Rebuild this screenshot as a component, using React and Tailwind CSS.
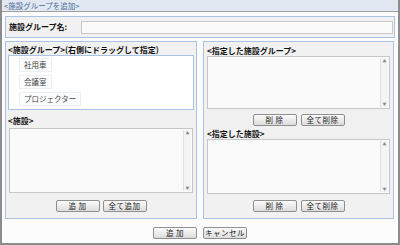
const FONT = { fontFamily: '"Noto Sans CJK JP", "Noto Sans", sans-serif' }

function Btn({ children }) {
  return (
    <button className="h-[12px] w-[44px] whitespace-nowrap rounded-[2px] border border-[#8f8f8f] bg-gradient-to-b from-[#fbfbfb] to-[#dcdcdc] px-0 text-[7.5px] leading-[10px] tracking-[0.5px] text-[#222]">
      {children}
    </button>
  )
}

function ListBox({ h }) {
  return (
    <div className={`mx-[3px] flex border border-[#c6c6c6] bg-[#fafafa] ${h}`}>
      <div className="flex-1" />
      <div className="my-[1px] mr-[1px] flex w-[8px] flex-col justify-between border-l border-[#e2e2e2] bg-[#f4f4f4] text-center text-[4px] leading-[6px] text-[#888]">
        <span>▲</span>
        <span>▼</span>
      </div>
    </div>
  )
}

const GROUPS = ['社用車', '会議室', 'プロジェクター']

export default function App() {
  return (
    <div style={FONT} className="flex h-[245px] w-[400px] flex-col border-x-2 border-b-2 border-[#8c8c8c] bg-[#fcfcfc] text-[#111]">
      <div className="h-[12px] border-b border-[#a0a0a0] bg-[#e1e8f2] pl-[2px] text-[7.5px] leading-[11px] text-[#4d6b98]">
        &lt;施設グループを追加&gt;
      </div>

      <div className="px-[3px]">
        <div className="mt-[4px] flex h-[22px] items-center border border-[#a9c3e4] bg-[#f1f1f1] pl-[3px] pr-[1px]">
          <span className="w-[72px] text-[8px] font-bold">施設グループ名:</span>
          <div className="h-[13px] flex-1 border border-[#c8c8c8] bg-[#fafafa]" />
        </div>

        <div className="mt-[3px] flex gap-[6px]">
          {/* left */}
          <div className="flex h-[178px] w-[192px] flex-col border border-[#a9c3e4] bg-[#f1f1f1]">
            <div className="pl-[2px] pt-[2px] text-[8px] font-bold leading-[11px]">&lt;施設グループ&gt;(右側にドラッグして指定)</div>
            <div className="mx-[2px] flex h-[55px] flex-col items-start gap-[3px] border border-[#a9c3e4] bg-white pl-[10px] pt-[2px]">
              {GROUPS.map((g) => (
                <div key={g} className="border border-[#eceef3] bg-[#fbfcfd] px-[4px] text-[7.5px] leading-[12px] text-[#444]">
                  {g}
                </div>
              ))}
            </div>
            <div className="pl-[2px] pt-[5px] text-[8px] font-bold leading-[11px]">&lt;施設&gt;</div>
            <div className="mt-[2px]">
              <ListBox h="h-[65px]" />
            </div>
            <div className="mt-[7px] flex justify-center gap-[3px]">
              <Btn>追 加</Btn>
              <Btn>全て追加</Btn>
            </div>
          </div>

          {/* right */}
          <div className="flex h-[178px] w-[191px] flex-col border border-[#a9c3e4] bg-[#f1f1f1]">
            <div className="pl-[3px] pt-[3px] text-[8px] font-bold leading-[11px]">&lt;指定した施設グループ&gt;</div>
            <ListBox h="h-[53px]" />
            <div className="mt-[5px] flex justify-center gap-[4px]">
              <Btn>削 除</Btn>
              <Btn>全て削除</Btn>
            </div>
            <div className="pl-[3px] pt-[2px] text-[8px] font-bold leading-[11px]">&lt;指定した施設&gt;</div>
            <ListBox h="h-[55px]" />
            <div className="mt-[6px] flex justify-center gap-[4px]">
              <Btn>削 除</Btn>
              <Btn>全て削除</Btn>
            </div>
          </div>
        </div>

        <div className="mt-[8px] flex justify-center gap-[6px]">
          <Btn>追 加</Btn>
          <Btn>キャンセル</Btn>
        </div>
      </div>
    </div>
  )
}
